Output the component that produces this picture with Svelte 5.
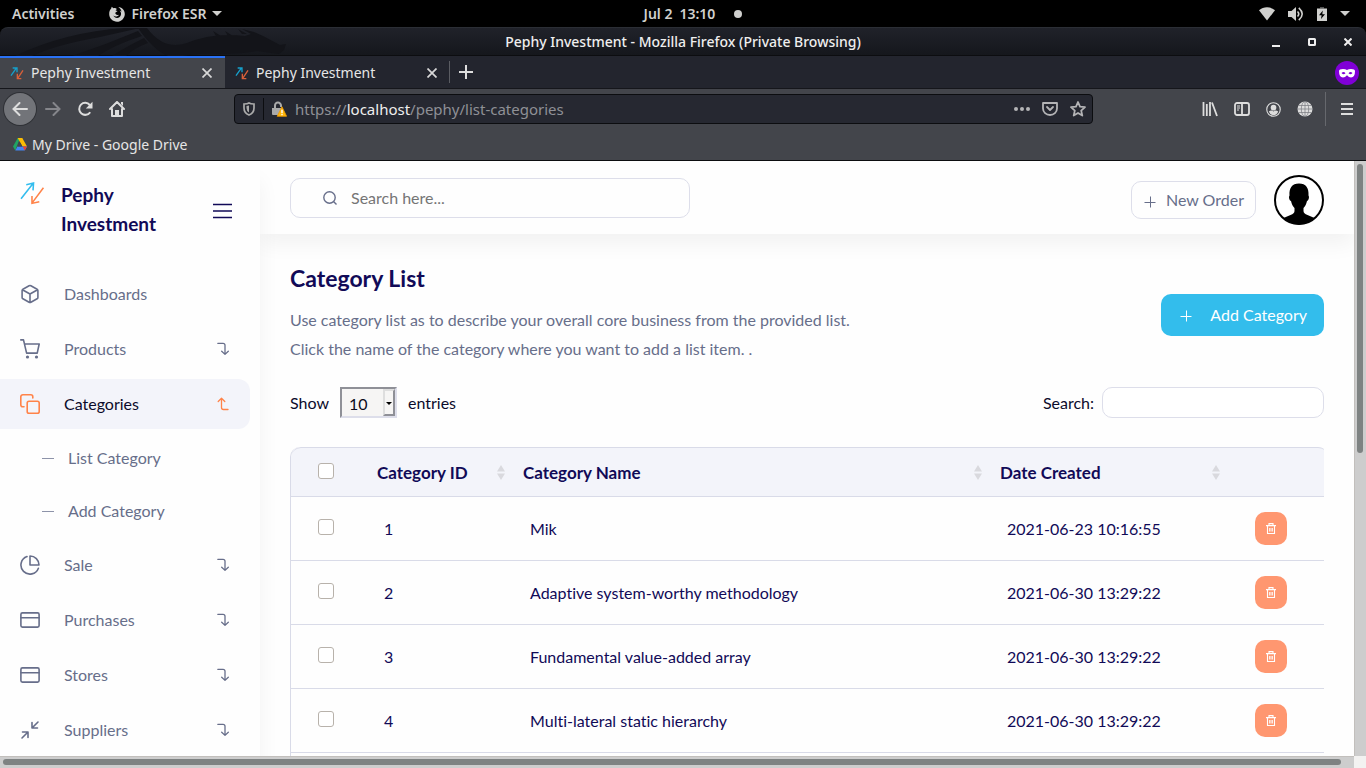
<script>
  const menuTop = [
    { label: 'Dashboards', icon: 'box', arrow: false },
    { label: 'Products', icon: 'cart', arrow: true }
  ];
  const subMenu = ['List Category', 'Add Category'];
  const menuBottom = [
    { label: 'Sale', icon: 'pie' },
    { label: 'Purchases', icon: 'card' },
    { label: 'Stores', icon: 'card' },
    { label: 'Suppliers', icon: 'shrink' }
  ];
  const rows = [
    { id: 1, name: 'Mik', date: '2021-06-23 10:16:55' },
    { id: 2, name: 'Adaptive system-worthy methodology', date: '2021-06-30 13:29:22' },
    { id: 3, name: 'Fundamental value-added array', date: '2021-06-30 13:29:22' },
    { id: 4, name: 'Multi-lateral static hierarchy', date: '2021-06-30 13:29:22' }
  ];
</script>

{#snippet menuIcon(name)}
  <svg class="menu-icon" viewBox="0 0 20 20" fill="none" stroke="currentColor" stroke-width="1.6" stroke-linecap="round" stroke-linejoin="round" aria-hidden="true">
    {#if name === 'box'}
      <path d="M9.1 1.7a1.8 1.8 0 0 1 1.8 0l6.2 3.5a1.6 1.6 0 0 1 .8 1.4v6.8a1.6 1.6 0 0 1-.8 1.4l-6.2 3.5a1.8 1.8 0 0 1-1.8 0l-6.2-3.5a1.6 1.6 0 0 1-.8-1.4V6.600a1.600 1.600 0 0 1 .8-1.400z M2.400 5.800 10 10l7.600-4.200M10 10v8.500" />
    {:else if name === 'cart'}
      <path d="M.8.9h2.700l3.100 13.200h10.600L19.200 5H4.500" />
      <circle cx="7.500" cy="18" r="1.600" fill="currentColor" stroke="none" />
      <circle cx="16.500" cy="18" r="1.600" fill="currentColor" stroke="none" />
    {:else if name === 'copy'}
      <rect x="7.200" y="7.200" width="12" height="12" rx="1.800" />
      <path d="M4 12.800H2.800a2 2 0 0 1-2-2v-8a2 2 0 0 1 2-2h8a2 2 0 0 1 2 2V4" />
    {:else if name === 'pie'}
      <path d="M7 1.600A9 9 0 1 0 18.400 13.200M10 1a9 9 0 0 1 9 9h-9z" />
    {:else if name === 'card'}
      <rect x=".9" y="2.900" width="18.200" height="14.200" rx="1.500" />
      <path d="M1 7.700h18" />
    {:else}
      <path d="M18 2l-6 6m0-5.500V8h5.500M2 18l6-6m0 5.500V12H2.500" />
    {/if}
  </svg>
{/snippet}

{#snippet turnArrow(up)}
  <svg class="turn" viewBox="0 0 12 14" fill="none" stroke="currentColor" stroke-width="1.300" stroke-linecap="round" stroke-linejoin="round" aria-hidden="true">
    {#if up}
      <path d="M11 12.500H6.500q-2 0-2-2V1.500M1.200 4.500l3.300-3.200 3.300 3.200" />
    {:else}
      <path d="M.8 1.300H6q2 0 2 2v8.900M4.700 9.300 8 12.400l3.300-3.100" />
    {/if}
  </svg>
{/snippet}

{#snippet favicon()}
  <svg class="favicon" viewBox="0 0 24 24" fill="none" stroke-width="2" aria-hidden="true">
    <path stroke="#16a0cc" d="M3 16 11.500 4M5.500 4.500h6.500V11" />
    <path stroke="#d8603a" d="M21 8 13 20M12.500 13v7.500h6" />
  </svg>
{/snippet}

{#snippet plus()}
  <svg class="plus" viewBox="0 0 12 12" stroke="currentColor" stroke-width="1" aria-hidden="true"><path d="M.5 6.500h11M6.500.5v11" /></svg>
{/snippet}

<div class="desktop">
  <div class="sysbar">
    <div class="sys-left">
      <span>Activities</span>
      <span class="app">
        <svg width="16" height="16" viewBox="0 0 16 16" aria-hidden="true">
          <path fill="#d0d0ce" d="M2.700.8 4.500 2.300C6 1.800 7 2.200 7.800 3L6.600 4.500l2 .6-2.300 1.700c0 1.700 1.500 2.700 3.700 1.900-1 2-4 2.400-5.600.7 1.200 3.400 6.400 3.400 7.500-.4.600-2-.4-3.700-1.400-4.400 1 .2 1.500.6 2 1.200C12.200 3.600 11 2 9.300.900 13.500 1.200 16 4.500 15.800 8.400 15.500 12.500 12 15.700 8 15.700S.3 12.500.2 8.300C.1 5.500 1 3.500 2.200 2.500z" />
        </svg>
        Firefox ESR
        <svg width="10" height="5" viewBox="0 0 10 5" aria-hidden="true"><path fill="#d0d0ce" d="M0 0h10L5 5z" /></svg>
      </span>
    </div>
    <div class="clock"><span>Jul 2</span><span>13:10</span><i></i></div>
    <div class="sys-right">
      <svg width="16" height="14" viewBox="0 0 16 14" aria-hidden="true"><path fill="#d0d0ce" d="M0 3.200C4.500-.7 11.500-.7 16 3.200L8 13.500z" /></svg>
      <svg width="16" height="16" viewBox="0 0 16 16" aria-hidden="true">
        <path fill="#d0d0ce" d="M0 5h3.500L8 1v14l-4.500-4H0z" />
        <path fill="none" stroke="#d0d0ce" stroke-width="1.600" d="M9.500 5.500q2.500 2.500 0 5M10.800 1.800q6.800 6.200 0 12.400" />
      </svg>
      <svg width="10" height="14" viewBox="0 0 10 14" aria-hidden="true"><path fill="#555" d="M3 0h4v1.500H3z" /><path fill="#d0d0ce" d="M0 1.500h10V14H0z" /><path fill="#000" d="M5.800 3.500 2 8.300h2.600L4 12l4-4.800H5.300z" /></svg>
      <svg width="10" height="5" viewBox="0 0 10 5" aria-hidden="true"><path fill="#d0d0ce" d="M0 0h10L5 5z" /></svg>
    </div>
  </div>

  <div class="titlebar">
    <svg class="dragon" width="290" height="28" viewBox="0 0 290 28" aria-hidden="true">
      <path d="M15 28Q65 4 125 0h15L100 9Q55 17 32 28zM72 28Q105 17 138 3l4 5Q114 17 98 28zM112 28q14-9 32-18l4 5q-14 5-22 13zM138 0h9q17 23 40 15 26-11 58-7l6-2-9-5 12 3 9 4 17 9 6-1-2 6-5 4-22-3-14 2-20 1q-30-2-46 4-19-1-39-30zM213 3l8 5h-5zm12 0 8 5h-5zm13-2 9 5h-5z" />
    </svg>
    <span>Pephy Investment - Mozilla Firefox (Private Browsing)</span>
    <div class="window-buttons">
      <button aria-label="Minimize"><svg width="8" height="10" viewBox="0 0 8 10"><path fill="#eee" d="M0 8h8v2H0z" /></svg></button>
      <button aria-label="Restore"><svg width="8" height="8" viewBox="0 0 8 8"><rect x="1" y="1" width="6" height="6" rx=".5" fill="none" stroke="#eee" stroke-width="2" /></svg></button>
      <button aria-label="Close"><svg width="8" height="8" viewBox="0 0 8 8"><path stroke="#eee" stroke-width="2" d="m.5.500 7 7m0-7-7 7" /></svg></button>
    </div>
  </div>

  <div class="tabs">
    {#each [true, false] as active}
      <div class="tab" class:active>
        {@render favicon()}
        <span>Pephy Investment</span>
        <button aria-label="Close tab"><svg width="10" height="10" viewBox="0 0 10 10"><path stroke="#d8d8d8" stroke-width="1.700" d="m.500.500 9 9m0-9-9 9" /></svg></button>
      </div>
    {/each}
    <button class="new-tab" aria-label="New tab"><svg width="14" height="14" viewBox="0 0 14 14"><path stroke="#ddd" stroke-width="2" d="M0 7h14M7 0v14" /></svg></button>
    <div class="private">
      <svg width="16" height="9" viewBox="0 0 16 9" aria-hidden="true"><path fill="#fff" fill-rule="evenodd" d="M0 2q0-2 4-2 2.500 0 4 1 1.500-1 4-1 4 0 4 2 0 6.500-4 6.500-2 0-4-2.300-2 2.300-4 2.300Q0 8.500 0 2zM2.500 4q2 2.500 4 .3-1.700-2.500-4-.3zm7 .3q2 2.200 4-.3-2.300-2.200-4 .3z" /></svg>
    </div>
  </div>

  <div class="navbar">
    <div class="nav-buttons">
      <button class="back" aria-label="Back"><svg width="16" height="14" viewBox="0 0 16 14" fill="none" stroke="#ddd" stroke-width="2" stroke-linecap="round"><path d="M15 7H2m5.500-6L1.500 7l6 6" /></svg></button>
      <button aria-label="Forward"><svg width="16" height="14" viewBox="0 0 16 14" fill="none" stroke="#85868b" stroke-width="2" stroke-linecap="round"><path d="M1 7h13M8.500 1l6 6-6 6" /></svg></button>
      <button aria-label="Reload"><svg width="16" height="16" viewBox="0 0 16 16" fill="none" stroke="#ddd" stroke-width="2"><path d="M13.200 11.200A6 6 0 1 1 12.800 4" /><path fill="#ddd" stroke="none" d="M15.500.800v6.700H8.800z" /></svg></button>
      <button aria-label="Home"><svg width="16" height="16" viewBox="0 0 16 16" fill="none" stroke="#ddd" stroke-width="2" stroke-linejoin="round" stroke-linecap="round"><path d="M1 8 8 1l7 7M3 8v7h10V8" /><path fill="#ddd" stroke="none" d="M6 9h4v6H6zM12 1h2v4l-2-2z" /></svg></button>
    </div>
    <div class="urlbar">
      <svg width="12" height="14" viewBox="0 0 12 14" aria-hidden="true"><path fill="none" stroke="#aaa" stroke-width="1.700" d="M1 2q3.500 0 5-1 1.500 1 5 1v4q0 5-5 7-5-2-5-7z" /><path fill="#aaa" d="M6 3.500v7Q3.500 9 3.500 6V4z" /></svg>
      <span class="url-sep"></span>
      <svg width="15" height="16" viewBox="0 0 15 16" aria-hidden="true"><path fill="none" stroke="#aaa" stroke-width="2" d="M3 7.500V4.700a3 3 0 0 1 6-.2V6" /><path fill="#aaa" d="M0 7h9.500v7H1a1 1 0 0 1-1-1z" /><path fill="#ffb60a" stroke="#f09a00" stroke-width=".8" stroke-linejoin="round" d="M10 5.800 14.600 15.300H5.200z" /><path fill="#fff" d="M9.300 8.800h1.400v3.400H9.300zm0 4.100h1.400v1.400H9.300z" /></svg>
      <span class="url">https://<b>localhost</b>/pephy/list-categories</span>
      <div class="url-actions">
        <svg width="16" height="4" viewBox="0 0 16 4" fill="#b4b4b6" aria-hidden="true"><circle cx="2" cy="2" r="2" /><circle cx="8" cy="2" r="2" /><circle cx="14" cy="2" r="2" /></svg>
        <svg width="16" height="14" viewBox="0 0 16 14" fill="none" stroke="#b4b4b6" stroke-width="1.800" stroke-linejoin="round" stroke-linecap="round" aria-hidden="true"><path d="M1 1h14v5.500a7 6.500 0 0 1-14 0zM5 5l3 3 3-3" /></svg>
        <svg width="16" height="16" viewBox="0 0 16 16" fill="none" stroke="#b4b4b6" stroke-width="1.800" stroke-linejoin="round" aria-hidden="true"><path d="m8 1 2 4.700 5 .5-3.800 3.400 1.100 5L8 12l-4.300 2.600 1.100-5L1 6.200l5-.5z" /></svg>
      </div>
    </div>
    <div class="tools">
      <svg width="16" height="16" viewBox="0 0 16 16" fill="none" stroke="#ddd" stroke-width="1.800" aria-hidden="true"><path d="M1.500 1v14M4.800 3v12M8 1v14M10 1.500l5 13.500" /></svg>
      <svg width="16" height="14" viewBox="0 0 16 14" fill="none" stroke="#ddd" stroke-width="1.800" aria-hidden="true"><rect x="1" y="1" width="14" height="12" rx="2" /><path d="M8 1v12" /><path stroke-width="1" d="M3 4h3M3 6h3M3 8h2" /></svg>
      <svg width="15" height="15" viewBox="0 0 16 16" aria-hidden="true"><circle cx="8" cy="8" r="7.200" fill="none" stroke="#ddd" stroke-width="1.200" /><circle cx="8" cy="6" r="3" fill="#ddd" /><path fill="#ddd" d="M3 10q2.500-2 5 0 2.500-2 5 0-1.500 4-5 4t-5-4z" /></svg>
      <svg width="16" height="16" viewBox="0 0 16 16" aria-hidden="true"><circle cx="8" cy="8" r="7.500" fill="#ddd" /><path fill="none" stroke="#77797e" stroke-width=".7" d="M8 0v16M0 8h16M1.500 4.500h13M1.500 11.500h13" /><ellipse cx="8" cy="8" rx="3.700" ry="7.500" fill="none" stroke="#77797e" stroke-width=".7" /></svg>
      <span class="tool-sep"></span>
      <button aria-label="Open menu"><svg width="12" height="12" viewBox="0 0 12 12"><path stroke="#ddd" stroke-width="2" d="M0 1h12M0 6h12M0 11h12" /></svg></button>
    </div>
  </div>

  <div class="bookmarks">
    <svg width="14" height="13" viewBox="0 0 14 13" aria-hidden="true"><path fill="#20a464" d="M4.700 0h2.300L4.500 6.500 2.300 12.500 0 8.500z" /><path fill="#fbbc04" d="M4.700 0h4.600L14 8.500H9.500z" /><path fill="#4285f4" d="M4.400 8.500H14l-2.300 4H2.300z" /><path fill="#ea4335" d="M9.700 8.500H14l-2.300 4z" /><path fill="#43454b" d="M7 4.200 9.400 8.500H4.600z" /></svg>
    <a href="#drive">My Drive - Google Drive</a>
  </div>

  <div class="viewport">
    <div class="page">
      <aside>
        <div class="brand">
          <svg class="logo" viewBox="0 0 24 24" fill="none" stroke-width="1.500" aria-hidden="true">
            <path stroke="#33bdee" d="M1 17 12.500 2.500M6 3.500l7-1.500-.500 7" />
            <path stroke="#ff8349" d="M22.500 6.500 12 20.500M11.500 14.500v7l7-1.500" />
          </svg>
          <h1>Pephy Investment</h1>
          <button aria-label="Toggle menu"><svg width="19" height="16" viewBox="0 0 19 16"><path stroke="#110a57" stroke-width="1.500" d="M0 1.500h19M0 8h19M0 14.500h19" /></svg></button>
        </div>
        <nav>
          {#each menuTop as item}
            <a class="item" href="#{item.label}">{@render menuIcon(item.icon)}<span>{item.label}</span>{#if item.arrow}{@render turnArrow(false)}{/if}</a>
          {/each}
          <a class="item current" href="#Categories">{@render menuIcon('copy')}<span>Categories</span>{@render turnArrow(true)}</a>
          {#each subMenu as label}
            <a class="sub" href="#{label}"><i></i><span>{label}</span></a>
          {/each}
          {#each menuBottom as item}
            <a class="item" href="#{item.label}">{@render menuIcon(item.icon)}<span>{item.label}</span>{@render turnArrow(false)}</a>
          {/each}
        </nav>
      </aside>

      <main>
        <header>
          <div class="search">
            <svg width="14" height="14" viewBox="0 0 14 14" fill="none" stroke="#676e8a" stroke-width="1.400" aria-hidden="true"><circle cx="6.500" cy="6.500" r="5.700" /><path d="m10.500 10.500 3 3" /></svg>
            <input type="text" placeholder="Search here..." aria-label="Search here" />
          </div>
          <div class="account">
            <button class="order">{@render plus()}<span>New Order</span></button>
            <svg width="50" height="50" viewBox="0 0 50 50" role="img" aria-label="Profile">
              <circle cx="25" cy="25" r="24" fill="#fff" stroke="#000" stroke-width="2" />
              <path d="M25 8.500c7 0 10 4.500 9.500 12 1.300 2-.3 5.500-1.500 5.500-.7 3.500-2 5.500-3.500 7v3q0 2.500 4 4l7 3Q34 49.500 25 49.500T9.500 43l7-3q4-1.500 4-4v-3c-1.500-1.500-2.800-3.500-3.500-7-1.200 0-2.800-3.500-1.500-5.500-.5-7.500 2.500-12 9.500-12z" />
            </svg>
          </div>
        </header>

        <section>
          <div class="intro">
            <div>
              <h2>Category List</h2>
              <p>Use category list as to describe your overall core business from the provided list.<br />Click the name of the category where you want to add a list item. .</p>
            </div>
            <button class="add">{@render plus()}<span>Add Category</span></button>
          </div>

          <div class="controls">
            <div class="length">
              <label for="entries">Show</label>
              <div class="select-wrap">
                <select id="entries"><option>10</option></select>
                <span class="select-arrow"></span>
              </div>
              <span>entries</span>
            </div>
            <div class="filter">
              <label for="filter">Search:</label>
              <input id="filter" type="search" />
            </div>
          </div>

          <div class="table-wrap">
            <table>
              <colgroup><col class="c-check" /><col class="c-id" /><col /><col class="c-date" /><col class="c-act" /></colgroup>
              <thead>
                <tr>
                  <th><input type="checkbox" aria-label="Select all" /></th>
                  {#each ['Category ID', 'Category Name', 'Date Created'] as title}
                    <th><div class="th">{title}<svg width="8" height="15" viewBox="0 0 8 15" aria-hidden="true"><path fill="#d9d9de" d="M4 0l4 6.500H0zM0 8.500h8L4 15z" /></svg></div></th>
                  {/each}
                  <th></th>
                </tr>
              </thead>
              <tbody>
                {#each rows as row}
                  <tr>
                    <td class="check"><input type="checkbox" aria-label="Select {row.name}" /></td>
                    <td>{row.id}</td>
                    <td>{row.name}</td>
                    <td>{row.date}</td>
                    <td class="act">
                      <button aria-label="Delete {row.name}">
                        <svg width="10" height="11" viewBox="0 0 10 11" fill="none" stroke="#fff" aria-hidden="true"><path stroke-width="1.100" d="M0 2.600h10M1.500 2.600v7.900h7V2.600M3 2.500V.6h4v1.900" /><path stroke-width=".9" d="M3.600 5v3.500M5 5v3.500M6.400 5v3.500" /></svg>
                      </button>
                    </td>
                  </tr>
                {/each}
              </tbody>
            </table>
          </div>
        </section>
      </main>
    </div>
    <div class="vscroll"><span></span></div>
    <div class="hscroll"><span></span></div>
    <div class="corner"></div>
  </div>
</div>

<style>
  :global(body) { margin: 0; }
  * { box-sizing: border-box; }
  svg { display: block; flex: none; }
  button { padding: 0; border: 0; background: none; font: inherit; color: inherit; display: flex; align-items: center; justify-content: center; }
  a { color: inherit; text-decoration: none; }

  .desktop { height: 100vh; display: flex; flex-direction: column; overflow: hidden; background: #000; color: #e6e6e6; font: 14px/20px "Noto Sans", sans-serif; }

  .sysbar { flex: none; height: 27px; display: grid; grid-template-columns: 1fr auto 1fr; align-items: center; padding: 0 16px 0 12px; color: #d0d0ce; font-weight: 600; }
  .sys-left { display: flex; gap: 35px; }
  .app { display: flex; align-items: center; gap: 6px; }
  .clock { display: flex; align-items: center; gap: 7px; padding-left: 24px; }
  .clock i { width: 8px; height: 8px; border-radius: 50%; background: #d0d0ce; margin-left: 12px; }
  .sys-right { display: flex; justify-content: flex-end; align-items: center; gap: 13px; }

  .titlebar { flex: none; height: 29px; position: relative; display: flex; align-items: center; justify-content: center; background: linear-gradient(#20222a, #15171c); border-top: 1px solid #2b2e35; border-bottom: 1px solid #0c0d10; border-radius: 8px 8px 0 0; color: #eee; font-weight: 500; }
  .dragon { position: absolute; left: 0; top: 0; fill: #131419; }
  .window-buttons { position: absolute; right: 14px; top: 9px; display: flex; gap: 28px; }

  .tabs { flex: none; height: 33px; display: flex; background: #23252e; border-bottom: 1px solid #15161b; }
  .tab { width: 225px; display: flex; align-items: center; padding: 2px 13px 0 9px; gap: 6px; }
  .tab.active { background: #43454b; border-top: 2px solid #2a72f5; padding-top: 0; }
  .tab span { flex: 1; }
  .favicon { width: 16px; height: 16px; }
  .new-tab { width: 33px; margin: 5px 0 5px -1px; border-left: 1px solid #5a5c62; }
  .private { margin: 5px 7px 0 auto; width: 24px; height: 24px; border-radius: 50%; background: #8000d7; display: flex; align-items: center; justify-content: center; }

  .navbar { flex: none; height: 40px; display: flex; align-items: center; background: #43454b; padding: 0 13px 0 4px; }
  .nav-buttons { display: flex; flex: none; width: 230px; }
  .nav-buttons button { width: 32px; height: 32px; }
  .nav-buttons .back { margin-right: 1px; background: #727479; border-radius: 50%; box-shadow: 0 0 0 1px #2f3136; }
  .urlbar { flex: 0 1 859px; height: 30px; display: flex; align-items: center; gap: 8px; background: #262831; border: 1px solid #0c0d10; border-radius: 4px; padding: 0 6px 0 8px; }
  .url-sep { width: 1px; height: 22px; background: #0c0d10; }
  .url { color: #8f9096; font-size: 15px; }
  .url b { color: #eee; font-weight: 400; }
  .url-actions { margin-left: auto; display: flex; align-items: center; gap: 12px; }
  .tools { margin-left: auto; display: flex; align-items: center; gap: 16px; }
  .tool-sep { width: 1px; height: 34px; background: #66686d; margin: 0 -1px 0 -4px; }

  .bookmarks { flex: none; height: 32px; display: flex; align-items: center; gap: 5px; padding-left: 13px; background: #43454b; border-bottom: 1px solid #0c0d10; }

  .viewport { flex: 1; min-height: 0; display: grid; grid-template: minmax(0, 1fr) 12px / minmax(0, 1fr) 12px; }
  .vscroll { background: #cdcdcd; border-left: 1px solid #c2bfbc; padding: 3px 2px; }
  .vscroll span { display: block; width: 6px; height: 49%; border-radius: 3px; background: #7e8282; }
  .hscroll { background: #cdcdcd; border-top: 1px solid #c2bfbc; padding: 2px 13px 0 3px; }
  .hscroll span { display: block; height: 6px; border-radius: 3px; background: #7e8282; }
  .corner { background: #f3f2f1; }

  .page { overflow: hidden; display: flex; background: #fefefe; color: #0b0b2b; font: 16px/29px Lato, sans-serif; font-variant-ligatures: none; }
  aside { flex: none; width: 260px; background: #fefefe; box-shadow: 0 20px 20px rgba(0, 0, 0, 0.05); position: relative; z-index: 2; }
  .brand { height: 108px; display: flex; padding: 19px 28px 0 20px; }
  .logo { width: 25px; height: 25px; margin-top: 1px; }
  h1 { flex: 1; margin: 0 24px 0 16px; font-size: 19px; line-height: 29px; font-weight: 700; color: #110a57; }
  .brand button { height: 61px; }
  nav { display: flex; flex-direction: column; gap: 5px; color: #676e8a; }
  .item { height: 50px; margin-right: 10px; padding: 0 21px 0 20px; display: flex; align-items: center; gap: 24px; border-radius: 0 12px 12px 0; }
  .item span { flex: 1; }
  .item span, .sub span, .order span { padding-bottom: 2px; }
  .menu-icon { width: 20px; height: 20px; }
  .turn { width: 12px; height: 14px; }
  .current { background: #f3f4fa; color: #0b0b2b; }
  .current svg { color: #ff8349; }
  .sub { height: 48px; padding-left: 42px; display: flex; align-items: center; gap: 14px; }
  .sub i { width: 12px; height: 1px; background: #8d93a9; }

  main { flex: 1; min-width: 0; }
  header { height: 73px; display: flex; align-items: center; justify-content: space-between; padding: 0 30px; background: #fefefe; box-shadow: 0 10px 20px rgba(0, 0, 0, 0.05); }
  .search { width: 400px; height: 40px; display: flex; align-items: center; gap: 14px; padding: 0 32px; border: 1px solid #dddeea; border-radius: 10px; }
  .search input { flex: 1; min-width: 0; border: 0; outline: 0; padding: 0; background: none; font: inherit; }
  .search input::placeholder { color: #757575; }
  .account { display: flex; align-items: center; gap: 18px; padding-top: 5px; }
  .plus { width: 12px; height: 12px; margin-top: 3px; }
  .order { height: 38px; gap: 10px; padding: 0 11px 0 12px; border: 1px solid #dddeea; border-radius: 10px; color: #676e8a; }

  section { padding: 30px 30px 0; }
  .intro { display: flex; justify-content: space-between; align-items: center; gap: 20px; }
  h2 { margin: 0 0 12px; font-size: 23px; line-height: 29px; font-weight: 700; color: #110a57; }
  p { margin: 0; color: #676e8a; }
  .add { flex: none; height: 42px; margin-top: 2px; gap: 18px; padding: 0 17px 0 19px; border-radius: 10px; background: #33bdec; color: #fff; }

  .controls { display: flex; justify-content: space-between; align-items: center; margin-top: 24px; }
  .length { display: flex; align-items: center; gap: 11px; }
  .select-wrap { position: relative; width: 57px; height: 31px; }
  select { appearance: none; width: 100%; height: 100%; padding: 0 0 0 7px; border: 2px solid; border-color: #8f9097 #dddeea #dddeea #8f9097; border-radius: 0; background: #f6f5f4; font: inherit; color: #0b0b1b; outline: 0; }
  .select-arrow { position: absolute; right: 2px; top: 2px; width: 12px; height: 27px; border: 2px solid; border-color: #dedede #8f9097 #8f9097 #dedede; background: #f6f5f4; pointer-events: none; }
  .select-arrow::after { content: ""; display: block; margin: 11px 0 0 1px; border: 3px solid transparent; border-top-color: #000; width: 0; }
  .filter { display: flex; align-items: center; gap: 8px; }
  .filter input { width: 222px; height: 31px; border: 1px solid #dddeea; border-radius: 10px; background: #fff; padding: 0 10px; font: inherit; }

  .table-wrap { margin-top: 29px; overflow: hidden; padding-bottom: 30px; border-left: 1px solid #d9dbe8; border-top-left-radius: 10px; }
  table { width: calc(100% + 4px); table-layout: fixed; border-collapse: separate; border-spacing: 0; color: #110a57; }
  .c-check { width: 76px; }
  .c-id { width: 146px; }
  .c-date { width: 238px; }
  .c-act { width: 100px; }
  th { height: 50px; padding: 0 8px 0 10px; background: #f3f4fa; border-top: 1px solid #d9dbe8; border-bottom: 1px solid #d9dbe8; text-align: left; font-size: 17px; font-weight: 700; }
  th:first-child { padding-left: 27px; border-top-left-radius: 10px; }
  th:last-child { border-top-right-radius: 10px; }
  .th { display: flex; align-items: center; justify-content: space-between; }
  td { height: 64px; padding: 0 0 0 17px; border-bottom: 1px solid #d9dbe8; }
  td.check { padding-left: 27px; }
  td.act { padding-left: 27px; }
  input[type='checkbox'] { appearance: none; display: block; width: 16px; height: 16px; margin: 0 0 4px; border: 1px solid #b8b2ab; border-radius: 3px; background: #fff; }
  th input[type='checkbox'] { margin-bottom: 2px; }
  .act button { width: 32px; height: 33px; border-radius: 10px; background: #ff9770; }
</style>
